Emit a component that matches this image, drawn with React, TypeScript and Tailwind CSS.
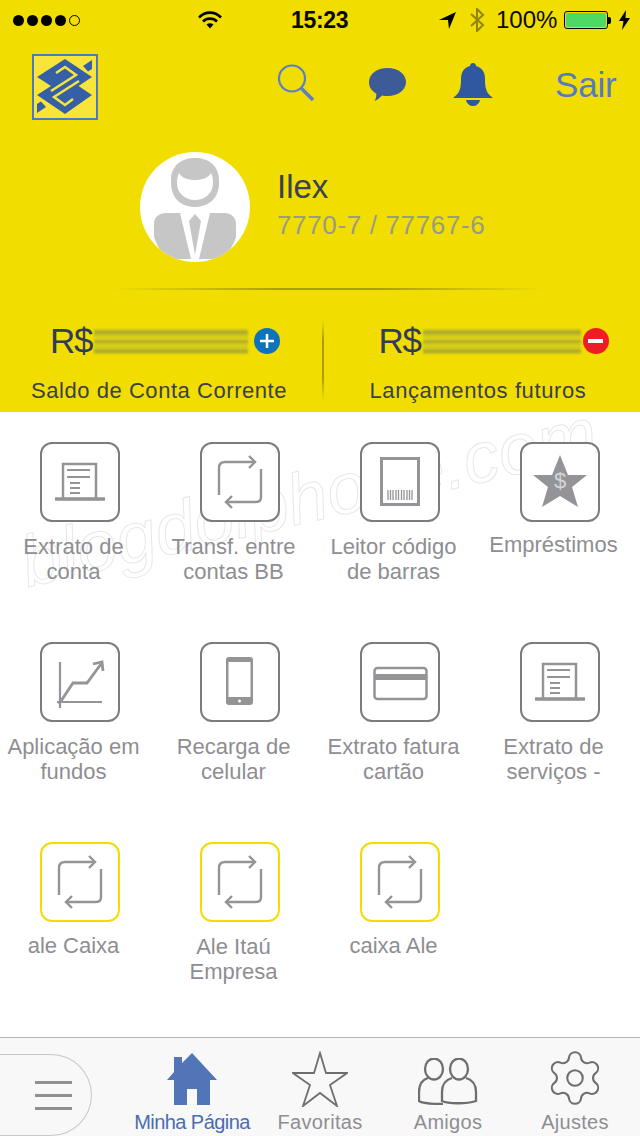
import React from "react";
import { Settings } from "lucide-react";

const IC = "#949498";

function Extrato() {
  return (
    <svg width="76" height="76" viewBox="0 0 76 76" fill="none" stroke={IC}>
      <path d="M13 55h50" strokeWidth="3.5" />
      <rect x="21" y="20" width="33" height="35" strokeWidth="2.5" />
      <path d="M25 26h23M25 33h23" strokeWidth="2.2" />
      <path d="M28 39h10M28 44h10M28 49h10" strokeWidth="2.2" />
    </svg>
  );
}
function Transfer() {
  return (
    <svg width="76" height="76" viewBox="0 0 76 76" fill="none" stroke={IC} strokeWidth="2.4">
      <path d="M17 51V24q0-6 6-6h29" />
      <path d="M47 12l6 6-6 6" />
      <path d="M59 25v28q0 5-5 5H24" />
      <path d="M30 52l-6 6 6 6" />
    </svg>
  );
}
function Barcode() {
  return (
    <svg width="76" height="76" viewBox="0 0 76 76" fill="none" stroke={IC}>
      <rect x="19.5" y="14.5" width="37" height="46" strokeWidth="3" />
      <path d="M26 46v10M28.500 46v10M31 46v10M34 46v10M36.500 46v10M39.500 46v10M42 46v10M45 46v10M47.500 46v10M50 46v10" strokeWidth="1.3" />
    </svg>
  );
}
function StarDollar() {
  return (
    <svg width="76" height="76" viewBox="0 0 76 76">
      <polygon points="38,11 46,31 65,31 50,43 56,63 38,52 20,63 26,43 11,31 30,31" fill={IC} />
      <text x="38" y="44" textAnchor="middle" fontSize="22" fontFamily="'Liberation Sans', sans-serif" fill="#d4d4d6">$</text>
    </svg>
  );
}
function Chart() {
  return (
    <svg width="76" height="76" viewBox="0 0 76 76" fill="none" stroke={IC} strokeWidth="2.2">
      <path d="M18 18v46M15 58h45" />
      <path d="M17 60l14-21h14l14-19" strokeWidth="2.800" />
      <path d="M51 20l9-2 1 9" strokeWidth="2.800" />
    </svg>
  );
}
function Phone() {
  return (
    <svg width="76" height="76" viewBox="0 0 76 76">
      <rect x="24" y="13" width="27" height="48" rx="3" fill={IC} />
      <rect x="26.500" y="18" width="22" height="35" fill="#fff" />
      <circle cx="37.500" cy="57" r="1.500" fill="#fff" />
    </svg>
  );
}
function Card() {
  return (
    <svg width="76" height="76" viewBox="0 0 76 76" fill="none" stroke={IC}>
      <rect x="12.500" y="24" width="52" height="31" rx="3" strokeWidth="2.500" />
      <path d="M12 33h53" strokeWidth="6" />
    </svg>
  );
}

const rows: { label: string[]; icon: React.ReactNode; yellow?: boolean; mt: string }[][] = [
  [
    { label: ["Extrato de", "conta"], icon: <Extrato />, mt: "mt-[12px]" },
    { label: ["Transf. entre", "contas BB"], icon: <Transfer />, mt: "mt-[12px]" },
    { label: ["Leitor código", "de barras"], icon: <Barcode />, mt: "mt-[12px]" },
    { label: ["Empréstimos"], icon: <StarDollar />, mt: "mt-[10px]" },
  ],
  [
    { label: ["Aplicação em", "fundos"], icon: <Chart />, mt: "mt-[12px]" },
    { label: ["Recarga de", "celular"], icon: <Phone />, mt: "mt-[12px]" },
    { label: ["Extrato fatura", "cartão"], icon: <Card />, mt: "mt-[12px]" },
    { label: ["Extrato de", "serviços -"], icon: <Extrato />, mt: "mt-[12px]" },
  ],
  [
    { label: ["ale Caixa"], icon: <Transfer />, yellow: true, mt: "mt-[11px]" },
    { label: ["Ale Itaú", "Empresa"], icon: <Transfer />, yellow: true, mt: "mt-[12px]" },
    { label: ["caixa Ale"], icon: <Transfer />, yellow: true, mt: "mt-[11px]" },
  ],
];

function Logo() {
  return (
    <div className="w-[66px] h-[66px] border-2 border-[#4f78c4] bg-[#f9e53a]">
      <svg width="62" height="62" viewBox="0 0 62 62">
        <g transform="translate(-2,-2)">
          <polygon points="5,23 33,5 60,23 33,41" fill="#3560a8" />
          <polygon points="5,41 33,23 60,41 33,60" fill="#3560a8" />
          <polygon points="51,12 60,6 60,15 56,17.500" fill="#3560a8" />
          <polygon points="5,59 5,50 9,47.500 14,53" fill="#3560a8" />
          <path d="M24 19L33 13 44 21 19 37" fill="none" stroke="#f9e53a" strokeWidth="2.500" />
          <path d="M41 45L33 51 22 43 47 27" fill="none" stroke="#f9e53a" strokeWidth="2.500" />
        </g>
      </svg>
    </div>
  );
}

function Avatar() {
  return (
    <div className="w-[110px] h-[110px] rounded-full bg-white overflow-hidden">
      <svg width="110" height="110" viewBox="0 0 110 110">
        <path fillRule="evenodd" fill="#c6c6c6" d="M31 28C31 14 41 6 55 6s24 8 24 22v3c0 15-10 24-24 24S31 46 31 31zM39 21c3 5 9 7 16 7s13-2 16-7c1.500 3 2 6 2 10 0 10-8 17-18 17s-18-7-18-17c0-4 .5-7 2-10z" />
        <path fill="#c6c6c6" d="M14 85v-13c0-7 5-11 12-11h14l11 46H34C24 105 18 97 14 85zM96 85V72c0-7-5-11-12-11H70L59 107h17c10-2 16-10 20-22z" />
        <path fill="#c6c6c6" d="M55 62l6 7-6 34-6-34z" />
      </svg>
    </div>
  );
}

function Blurred({ w }: { w: string }) {
  return (
    <div className={`${w} h-[25px] blur-[1.200px] bg-[linear-gradient(180deg,#d4cc1a_0%,#a8a432_14%,#d6ce18_28%,#dcd414_40%,#aba633_50%,#d8d016_62%,#d2ca1a_78%,#a5a134_90%,#d6ce18_100%)]`} />
  );
}

export default function App() {
  return (
    <div className="relative w-[640px] h-[1136px] overflow-hidden bg-white font-['Liberation_Sans',Arial,sans-serif]">
      <div className="relative z-10 w-full h-[412px] bg-[#f1de00] flex flex-col">
        {/* Status bar */}
        <div className="h-[40px] flex items-center text-black">
          <div className="ml-[13px] flex gap-[3px] items-center w-[70px]">
            <span className="w-[11px] h-[11px] rounded-full bg-black" />
            <span className="w-[11px] h-[11px] rounded-full bg-black" />
            <span className="w-[11px] h-[11px] rounded-full bg-black" />
            <span className="w-[11px] h-[11px] rounded-full bg-black" />
            <span className="w-[11px] h-[11px] rounded-full border border-black" />
          </div>
          <svg className="ml-[115px]" width="24" height="18" viewBox="0 0 24 18" fill="none" stroke="#000" strokeWidth="2.600">
            <path d="M1 6.500C7.500 0 16.500 0 23 6.500" />
            <path d="M5 10.500c4-3.800 10-3.800 14 0" />
            <path d="M12 17.500l-3.500-4c2-1.700 5-1.700 7 0z" fill="#000" stroke="none" />
          </svg>
          <span className="ml-[69px] w-[60px] text-[23px] font-bold tracking-[-0.3px] text-[#0a0a00]">15:23</span>
          <svg className="ml-[88px]" width="17" height="17" viewBox="0 0 17 17"><path d="M0 8L17 0 10 17 9 8z" fill="#000" /></svg>
          <svg className="ml-[13px]" width="16" height="24" viewBox="0 0 16 24" fill="none" stroke="#8f8410" strokeWidth="2"><path d="M2 6l12 11-6 6V1l6 6L2 18" /></svg>
          <span className="ml-[11px] w-[62px] text-[24px] text-[#0a0a00]">100%</span>
          <div className="ml-[6px] flex items-center">
            <div className="w-[44px] h-[18px] border border-black rounded-[3px] p-[1px]"><div className="w-full h-full bg-[#4cd964] rounded-[2px]" /></div>
            <div className="w-[3px] h-[7px] bg-black rounded-r-[2px]" />
          </div>
          <svg className="ml-[8px]" width="11" height="20" viewBox="0 0 11 20"><path d="M7 0L0 11h4.500L3 20l8-12H6.500z" fill="#000" /></svg>
        </div>
        {/* Nav */}
        <div className="mt-[14px] ml-[32px] flex items-start h-[66px]">
          <Logo />
          <svg className="ml-[179px] mt-[10px]" width="38" height="37" viewBox="0 0 38 37" fill="none" stroke="#5b7fc8"><circle cx="15" cy="14.500" r="13" strokeWidth="2.200" /><path d="M24 24l12 12" strokeWidth="3.500" /></svg>
          <svg className="ml-[54px] mt-[14px]" width="37" height="33" viewBox="0 0 37 33"><path d="M18.500 0C29 0 37 6 37 14s-8 14-18.500 14c-2 0-4-.2-5.500-.6C11 29.500 8.500 32 5.500 33c1.200-2 2-4.500 1.800-7.500C2.500 23 0 19 0 14 0 6 8 0 18.500 0z" fill="#3d5b96" /></svg>
          <svg className="ml-[47px] mt-[9px]" width="40" height="43" viewBox="0 0 40 43"><path d="M20 0c2 0 3 1.500 3 3 6 1.500 9 6 9 13 0 9 1 14 8 19H0c7-5 8-10 8-19 0-7 3-11.500 9-13 0-1.500 1-3 3-3zM13 37h14c-1 4-4 6-7 6s-6-2-7-6z" fill="#2f58a1" /></svg>
          <span className="ml-[62px] mt-[9px] text-[35px] leading-[44px] text-[#5579c4] tracking-[-0.2px]">Sair</span>
        </div>
        {/* Profile */}
        <div className="mt-[32px] ml-[140px] flex">
          <Avatar />
          <div className="ml-[27px] flex flex-col">
            <span className="mt-[15px] text-[33px] leading-[40px] text-[#3a4252]">Ilex</span>
            <span className="mt-[1px] text-[26px] leading-[34px] tracking-[0.65px] text-[#9a9a88]">7770-7 / 77767-6</span>
          </div>
        </div>
        <div className="mt-[26px] ml-[110px] mr-[93px] h-[2px] bg-[linear-gradient(90deg,transparent,#a89c10_40%,#a89c10_60%,transparent)]" />
        {/* Balances */}
        <div className="flex-1 flex">
          <div className="w-[322px] pt-[29px] flex flex-col pl-[50px]">
            <div className="flex items-center h-[44px]">
              <span className="text-[35px] tracking-[-1.200px] text-[#333c55] w-[44px]">R$</span>
              <Blurred w="w-[154px]" />
              <span className="ml-[6px] w-[26px] h-[26px] rounded-full bg-[#0f72bd] flex items-center justify-center">
                <svg width="16" height="16" viewBox="0 0 16 16"><path d="M8 1v14M1 8h14" stroke="#fff" strokeWidth="2.500" /></svg>
              </span>
            </div>
            <span className="mt-[14px] -ml-[19px] text-[22px] leading-[28px] text-[#3a3f48] tracking-[0.55px] whitespace-nowrap">Saldo de Conta Corrente</span>
          </div>
          <div className="mt-[30px] mb-[11px] w-[1.500px] bg-[linear-gradient(180deg,transparent,#a89c10_25%,#a89c10_70%,transparent)]" />
          <div className="flex-1 pt-[29px] flex flex-col pl-[55px]">
            <div className="flex items-center h-[44px]">
              <span className="text-[35px] tracking-[-1.200px] text-[#333c55] w-[44px]">R$</span>
              <Blurred w="w-[158px]" />
              <span className="ml-[2px] w-[26px] h-[26px] rounded-full bg-[#ee1c25] flex items-center justify-center">
                <span className="w-[15px] h-[4px] bg-white" />
              </span>
            </div>
            <span className="mt-[14px] -ml-[9px] text-[22px] leading-[28px] text-[#3a3f48] tracking-[0.6px] whitespace-nowrap">Lançamentos futuros</span>
          </div>
        </div>
      </div>

      {/* Watermark */}
      <div className="absolute left-[22px] top-[503px] -rotate-[13deg] origin-left text-[72px] leading-[120px] text-transparent [-webkit-text-stroke:1px_#e8e8e8] italic whitespace-nowrap pointer-events-none">
        blogdoiphone.com
      </div>

      {/* Grid */}
      <div className="relative pt-[30px] h-[625px]">
        {rows.map((row, i) => (
          <div key={i} className="grid grid-cols-4 h-[200px]">
            {row.map((item) => (
              <div key={item.label.join()} className="flex flex-col items-center">
                <div className={`w-[80px] h-[80px] bg-white rounded-[12px] border-2 flex items-center justify-center ${item.yellow ? "border-[#f1de00]" : "border-[#7c7c80]"}`}>
                  {item.icon}
                </div>
                <div className={`${item.mt} w-[147px] self-start text-[22px] leading-[25px] text-center text-[#8e8e92] whitespace-nowrap`}>
                  {item.label.map((l) => <div key={l}>{l}</div>)}
                </div>
              </div>
            ))}
          </div>
        ))}
      </div>

      {/* Tab bar */}
      <div className="relative h-[99px] border-t border-[#b4b4b4] bg-[#f8f8f8] flex">
        <div className="mt-[16px] h-[82px] w-[92px] rounded-r-[41px] border border-l-0 border-[#c8c8c8] flex flex-col gap-[10px] pl-[35px] pt-[26px]">
          <span className="w-[37px] h-[3px] bg-[#909090]" />
          <span className="w-[37px] h-[3px] bg-[#909090]" />
          <span className="w-[37px] h-[3px] bg-[#909090]" />
        </div>
        <div className="ml-[36px] flex-1 grid grid-cols-4">
          <div className="flex flex-col items-center">
            <svg className="mt-[15px]" width="50" height="52" viewBox="0 0 50 52"><path d="M25 0l25 27h-7v25H30V36H20v16H7V27H0L7 19V4h8v6z" fill="#5275b8" /></svg>
            <span className="mt-[5px] text-[20px] leading-[24px] text-[#4a6cb2] tracking-[-0.55px] whitespace-nowrap">Minha Página</span>
          </div>
          <div className="flex flex-col items-center">
            <svg className="mt-[13px]" width="56" height="56" viewBox="0 0 56 56" fill="none" stroke="#6e6e6e" strokeWidth="1.800"><polygon points="28,2 34,22 55,22 38,34 45,55 28,42 11,55 18,34 1,22 22,22" /></svg>
            <span className="mt-[3px] text-[20px] leading-[24px] tracking-[0.3px] text-[#8e8e92] whitespace-nowrap">Favoritas</span>
          </div>
          <div className="flex flex-col items-center">
            <svg className="mt-[20px]" width="60" height="47" viewBox="0 0 60 47" fill="none" stroke="#6e6e6e" strokeWidth="2.300">
              <ellipse cx="16" cy="11" rx="9" ry="10.500" />
              <path d="M10 20C4 22 1 27 1 34v9c3 2 12 3 24 3" />
              <ellipse cx="41" cy="11" rx="9" ry="10.500" />
              <path d="M34 20c-7 2-10 7-10 14v9c6 3 25 3 34 0v-9c0-7-3-12-10-14" />
            </svg>
            <span className="mt-[5px] text-[20px] leading-[24px] tracking-[0.3px] text-[#8e8e92] whitespace-nowrap">Amigos</span>
          </div>
          <div className="flex flex-col items-center">
            <Settings className="mt-[9px] -ml-[2px]" size={62} strokeWidth={0.8} color="#6e6e6e" />
            <span className="mt-[1px] -ml-[2px] text-[20px] leading-[24px] tracking-[0.3px] text-[#8e8e92] whitespace-nowrap">Ajustes</span>
          </div>
        </div>
      </div>
    </div>
  );
}
